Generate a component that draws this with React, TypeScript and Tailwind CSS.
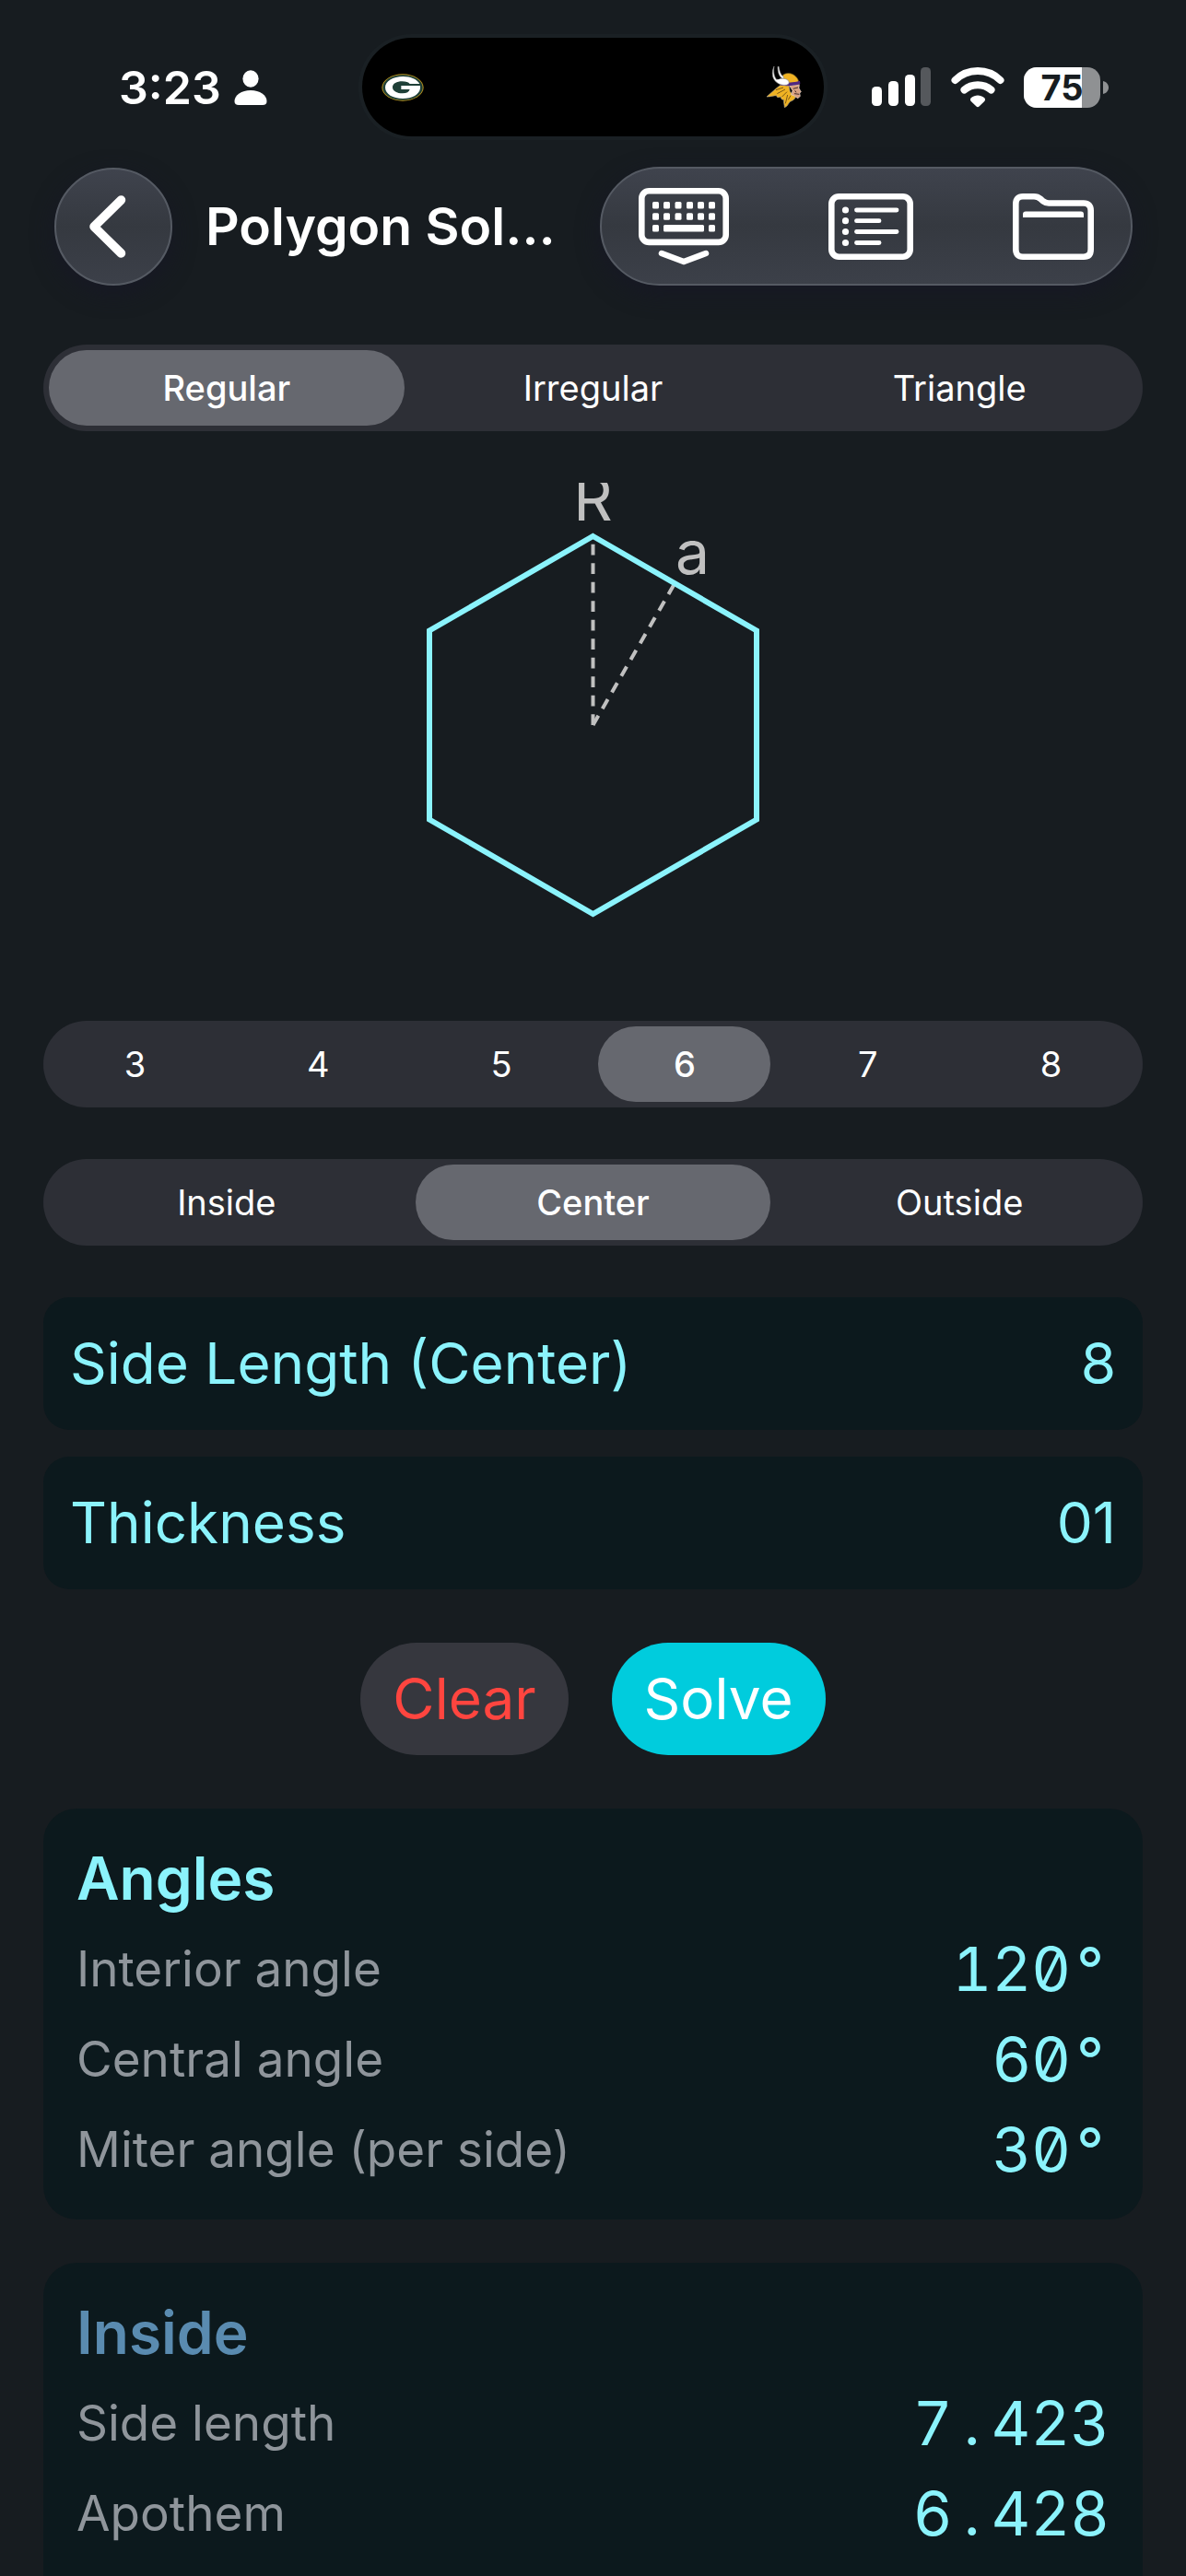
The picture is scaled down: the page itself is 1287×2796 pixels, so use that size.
import React, { useState } from "react";

const SEGMENT_TYPES = ["Regular", "Irregular", "Triangle"];
const SIDE_COUNTS = ["3", "4", "5", "6", "7", "8"];
const REFERENCES = ["Inside", "Center", "Outside"];

function PersonIcon() {
  return (
    <svg className="h-[38px] w-[36px]" viewBox="0 0 36 38" fill="#fff" aria-hidden="true">
      <ellipse cx="18" cy="9.5" rx="8.6" ry="9.3" />
      <path d="M5 38C2 38 .5 36.500 .5 34C.5 27 8 22 18 22S35.500 27 35.500 34C35.500 36.500 34 38 31 38Z" />
    </svg>
  );
}

function PackersLogo() {
  return (
    <svg className="h-[30px] w-[46px]" viewBox="0 0 138 90" role="img" aria-label="Green Bay">
      <ellipse cx="69" cy="45" rx="68" ry="44" fill="#b58f1c" />
      <ellipse cx="69" cy="45" rx="65" ry="41" fill="#1f4038" />
      <path
        d="M124 33C116 18 96 9 70 9C37 9 12 24 12 45S37 81 69 81C100 81 124 67 126 47V39H64V51H92C90 59 82 64 69 64C50 64 36 56 36 44C36 32 50 25 67 25C80 25 88 28 92 33Z"
        fill="#fff"
      />
    </svg>
  );
}

function VikingsLogo() {
  return (
    <svg className="h-[45px] w-[38px]" viewBox="36 -9 114 135" role="img" aria-label="Minnesota">
      <path d="M88 20C102 8 124 14 134 28C138 33 140 38 140 44L104 46L88 34Z" fill="#f0b323" stroke="#6b5a2a" strokeWidth="2" />
      <path d="M84 50C66 62 52 76 36 90C50 90 58 86 68 86C68 92 74 94 82 90C82 98 86 100 92 100C90 108 94 116 94 125C104 122 106 112 112 106C122 102 128 98 130 90L112 74L108 54Z" fill="#f0b323" stroke="#aaa28b" strokeWidth="2" />
      <path d="M110 54L142 50L141 62L148 74L143 78L145 88L138 95C130 92 126 84 116 84L120 70Z" fill="#d9a182" stroke="#e6d7ce" strokeWidth="2" />
      <path d="M122 64L138 60M126 80L142 82M128 70L132 76" stroke="#402a28" strokeWidth="3" />
      <path d="M66 68L90 60M70 80L96 66M86 90L102 74M97 112L104 84M106 100L114 86" stroke="#7d5916" strokeWidth="3" fill="none" />
      <path d="M80 43C100 46 122 44 144 38L145 48C124 54 102 56 82 53Z" fill="#4f2683" />
      <path d="M75 -9C78 6 80 18 92 26L88 32C76 24 72 10 72 -8Z" fill="#fff" stroke="#888" strokeWidth="2" />
      <path d="M60 -9C58 4 58 22 68 34C76 32 90 28 102 34C112 40 110 52 98 52C80 54 60 42 56 24C53 10 56 0 60 -9Z" fill="#fff" stroke="#8b8b8b" strokeWidth="2" />
      <path d="M66 -6C66 8 68 22 76 32" stroke="#000" strokeWidth="5" fill="none" />
    </svg>
  );
}

function SignalIcon() {
  return (
    <svg className="h-[44px] w-[65px]" viewBox="0 0 65 44" fill="#fff" role="img" aria-label="Signal">
      <rect x="0" y="21" width="11" height="21" rx="4.500" />
      <rect x="18" y="15" width="11" height="27" rx="4.500" />
      <rect x="36" y="8" width="11" height="34" rx="4.500" />
      <rect x="53" y="0" width="11" height="42" rx="4.500" fill="#55585c" />
    </svg>
  );
}

function WifiIcon() {
  return (
    <svg className="h-[44px] w-[58px]" viewBox="0 0 58 44" fill="none" role="img" aria-label="Wi-Fi">
      <path d="M4.500 14C18 .8 40 .8 53.500 14" stroke="#fff" strokeWidth="8" strokeLinecap="round" />
      <path d="M14.500 24.500C22.500 17.500 35.500 17.500 43.500 24.500" stroke="#fff" strokeWidth="8" strokeLinecap="round" />
      <path d="M22 33C26 29.500 32 29.500 36 33C37.500 34.500 37.300 36 36 37.300L30.500 42.500C29.500 43.500 28.500 43.500 27.500 42.500L22 37.300C20.700 36 20.500 34.500 22 33Z" fill="#fff" />
    </svg>
  );
}

function Battery() {
  return (
    <div className="flex items-center gap-[3px]" role="img" aria-label="Battery 75 percent">
      <div className="relative h-[44px] w-[83px] overflow-hidden rounded-[14px] bg-[#8f9193]">
        <div className="h-full w-[63px] bg-white" />
        <span className="absolute inset-0 text-center text-[38px] leading-[44px] font-bold text-[#171c20]">75</span>
      </div>
      <svg className="h-[14px] w-[6px]" viewBox="0 0 6 14" fill="#8f9193" aria-hidden="true">
        <path d="M0 0C4 1 6 4 6 7S4 13 0 14Z" />
      </svg>
    </div>
  );
}

function KeyboardIcon() {
  const columns = [15, 27, 39.5, 52, 64, 76];
  return (
    <svg className="h-[84px] w-[98px]" viewBox="0 0 98 84" fill="none" aria-hidden="true">
      <rect x="3.300" y="3.300" width="91.400" height="55.600" rx="8" stroke="#fff" strokeWidth="6.600" />
      {columns.map((x) => (
        <g key={x} fill="#fff">
          <rect x={x} y="15" width="7" height="7.500" rx="1.500" />
          <rect x={x} y="27.300" width="7" height="7.500" rx="1.500" />
        </g>
      ))}
      <rect x="15" y="40" width="7" height="7.500" rx="1.500" fill="#fff" />
      <rect x="27" y="40" width="44" height="7.500" rx="1.500" fill="#fff" />
      <rect x="76" y="40" width="7" height="7.500" rx="1.500" fill="#fff" />
      <path d="M25 71L49 80L73 71" stroke="#fff" strokeWidth="6.500" strokeLinecap="round" strokeLinejoin="round" />
    </svg>
  );
}

function ListIcon() {
  const rows = [
    { y: 18, end: 74 },
    { y: 29.7, end: 55 },
    { y: 41.5, end: 74 },
    { y: 53.5, end: 55 },
  ];
  return (
    <svg className="h-[72px] w-[92px]" viewBox="0 0 92 72" fill="none" aria-hidden="true">
      <rect x="3.300" y="3.300" width="85.400" height="65.400" rx="8" stroke="#fff" strokeWidth="6.600" />
      {rows.map((row) => (
        <g key={row.y}>
          <circle cx="18.500" cy={row.y} r="3.600" fill="#fff" />
          <path d={`M30.500 ${row.y}H${row.end}`} stroke="#fff" strokeWidth="4.800" strokeLinecap="round" />
        </g>
      ))}
    </svg>
  );
}

function FolderIcon() {
  return (
    <svg className="h-[72px] w-[88px]" viewBox="0 0 88 72" fill="none" aria-hidden="true">
      <path
        d="M3.300 60.500V11.500C3.300 6 6 3.300 11 3.300H23C26 3.300 28 4 30 5.800L33 8.400C35 10 36.500 10.500 39 10.500H77C82 10.500 84.700 13.500 84.700 18.500V60.500C84.700 66 82 68.700 77 68.700H11C6 68.700 3.300 66 3.300 60.500Z"
        stroke="#fff"
        strokeWidth="6.600"
      />
      <path d="M11 26V22.500C11 20.500 12 19.500 14 19.500H74C76 19.500 77 20.500 77 22.500V26Z" fill="#fff" />
    </svg>
  );
}

function StatusBar() {
  return (
    <div className="grid grid-cols-[1fr_auto_1fr] items-center pt-[41px] text-white">
      <div className="flex items-center gap-[14px] pl-[129px]">
        <span className="text-[50px] leading-[60px] font-semibold">3:23</span>
        <PersonIcon />
      </div>
      <div className="flex h-[107px] w-[501px] items-center justify-between rounded-full bg-black pr-[24px] pl-[21px] ring-4 ring-[#1a2024]">
        <PackersLogo />
        <VikingsLogo />
      </div>
      <div className="flex items-center justify-end gap-[21px] pr-[84px]">
        <SignalIcon />
        <WifiIcon />
        <Battery />
      </div>
    </div>
  );
}

const GLASS =
  "rounded-full border-2 border-[#555a63] bg-linear-to-b from-[#3f434d] via-[#353940] via-50% to-[#3c4049] shadow-[0_8px_24px_#171825]";

function Header() {
  return (
    <header className="flex items-center pt-[33px] pr-[58px] pl-[59px] text-white">
      <button type="button" aria-label="Back" className={`flex size-[128px] shrink-0 items-center justify-center ${GLASS}`}>
        <svg className="h-[70px] w-[52px]" viewBox="0 0 52 70" fill="none" aria-hidden="true">
          <path d="M34.500 6L5 35L34.500 64" stroke="#fff" strokeWidth="9.500" strokeLinecap="round" strokeLinejoin="round" />
        </svg>
      </button>
      <h1 className="min-w-0 flex-1 pl-[36px] text-[57px] leading-[72px] font-semibold whitespace-nowrap">Polygon Sol…</h1>
      <div className={`flex h-[129px] shrink-0 items-center gap-[108px] px-[40px] ${GLASS}`}>
        <button type="button" aria-label="Hide keyboard">
          <KeyboardIcon />
        </button>
        <button type="button" aria-label="Show list">
          <ListIcon />
        </button>
        <button type="button" aria-label="Open folder">
          <FolderIcon />
        </button>
      </div>
    </header>
  );
}

interface SegmentedProps {
  name: string;
  label: string;
  options: string[];
  value: string;
  onChange: (value: string) => void;
}

function Segmented({ name, label, options, value, onChange }: SegmentedProps) {
  return (
    <div role="radiogroup" aria-label={label} className="flex h-[94px] rounded-full bg-[#2d2f36]">
      {options.map((option) => (
        <label key={option} className="relative flex flex-1 cursor-pointer p-[6px]">
          <input
            type="radio"
            name={name}
            value={option}
            checked={option === value}
            onChange={() => onChange(option)}
            className="peer absolute inset-0 size-full cursor-pointer opacity-0"
          />
          <span className="flex flex-1 items-center justify-center rounded-full text-[38px] leading-[48px] text-white peer-checked:bg-[#66686f] peer-checked:font-medium">
            {option}
          </span>
        </label>
      ))}
    </div>
  );
}

function PolygonDiagram() {
  return (
    <svg className="h-[528px] w-full overflow-hidden" viewBox="0 0 1192 528" role="img" aria-label="Regular hexagon with radius R and apothem a">
      <g stroke="#c0c0c0" strokeWidth="4" strokeDasharray="11.700 8.800">
        <path d="M596 263V58" />
        <path d="M596 263L684.500 109.500" />
      </g>
      <path d="M596 58L773.500 160.500V365.500L596 468L418.500 365.500V160.500Z" fill="none" stroke="#8bf3fc" strokeWidth="6" />
      <g fill="#c0c0c0" fontSize="66" textAnchor="middle">
        <text x="596" y="41">R</text>
        <text x="704" y="99">a</text>
      </g>
    </svg>
  );
}

function Field({ id, label, initial }: { id: string; label: string; initial: string }) {
  const [value, setValue] = useState(initial);
  return (
    <div className="flex h-[144px] items-center justify-between rounded-[28px] bg-[#0c191d] px-[29px] text-[62px] leading-[80px] text-[#8bf3fc]">
      <label htmlFor={id} className="whitespace-nowrap">
        {label}
      </label>
      <input
        id={id}
        inputMode="decimal"
        value={value}
        onChange={(event) => setValue(event.target.value)}
        className="w-0 min-w-0 flex-1 bg-transparent text-right outline-none"
      />
    </div>
  );
}

/* Points and degree signs take the same cell width as a digit, so columns line up. */
function Figure({ value }: { value: string }) {
  return (
    <>
      {value.split(/([.°])/).map((part, index) =>
        part === "." || part === "°" ? (
          <span key={index} className="inline-block w-[42px] text-center">
            {part}
          </span>
        ) : (
          part
        ),
      )}
    </>
  );
}

function ResultRows({ rows }: { rows: [string, string][] }) {
  return (
    <dl className="flex flex-col gap-[18px]">
      {rows.map(([label, value]) => (
        <div key={label} className="flex items-center justify-between leading-[80px]">
          <dt className="text-[53px] text-[#8f959b]">{label}</dt>
          <dd className="text-[66px] text-[#8bf3fc] slashed-zero tabular-nums">
            <Figure value={value} />
          </dd>
        </div>
      ))}
    </dl>
  );
}

export default function App() {
  const [kind, setKind] = useState("Regular");
  const [sides, setSides] = useState("6");
  const [reference, setReference] = useState("Center");

  return (
    <div className="flex min-h-screen flex-col bg-[#171c20] font-['Inter',sans-serif]">
      <StatusBar />
      <Header />
      <main className="flex flex-1 flex-col px-[47px] pt-[64px]">
        <div className="flex flex-col gap-[56px]">
          <Segmented name="kind" label="Polygon type" options={SEGMENT_TYPES} value={kind} onChange={setKind} />
          <PolygonDiagram />
          <Segmented name="sides" label="Number of sides" options={SIDE_COUNTS} value={sides} onChange={setSides} />
          <Segmented name="reference" label="Measured at" options={REFERENCES} value={reference} onChange={setReference} />
          <div className="flex flex-col gap-[29px]">
            <Field id="side-length" label="Side Length (Center)" initial="8" />
            <Field id="thickness" label="Thickness" initial="01" />
          </div>
        </div>

        <div className="flex justify-center gap-[47px] py-[58px] text-[62px] leading-[80px]">
          <button type="button" className="h-[122px] rounded-full bg-[#36373e] px-[35px] text-[#ff453f]">
            Clear
          </button>
          <button type="button" className="h-[122px] rounded-full bg-[#00ccdd] px-[35px] text-white">
            Solve
          </button>
        </div>

        <section className="rounded-[36px] bg-[#0c191d] p-[36px]">
          <h2 className="pb-[18px] text-[64px] leading-[80px] font-semibold text-[#8bf3fc]">Angles</h2>
          <ResultRows
            rows={[
              ["Interior angle", "120°"],
              ["Central angle", "60°"],
              ["Miter angle (per side)", "30°"],
            ]}
          />
        </section>

        <section className="mt-[47px] flex-1 rounded-t-[36px] bg-[#0c191d] px-[36px] pt-[36px]">
          <h2 className="pb-[18px] text-[64px] leading-[80px] font-semibold text-[#5a8bb0]">Inside</h2>
          <ResultRows
            rows={[
              ["Side length", "7.423"],
              ["Apothem", "6.428"],
            ]}
          />
        </section>
      </main>
    </div>
  );
}
